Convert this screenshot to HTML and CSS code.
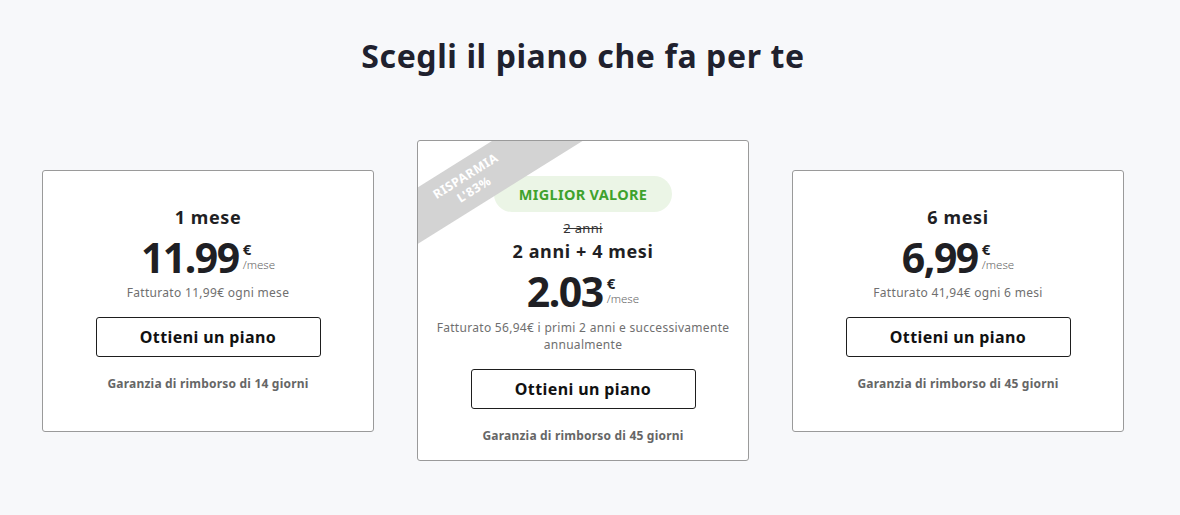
FILE: index.html
```html
<!DOCTYPE html>
<html lang="it">
<head>
<meta charset="utf-8">
<title>Scegli il piano</title>
<link rel="stylesheet" href="styles.css">
</head>
<body>
<div class="page">
  <h1 class="title">Scegli il piano che fa per te</h1>
  <div class="plans">
    <div class="card">
      <div class="plan-name">1 mese</div>
      <div class="price"><span class="amount">11.99</span><span class="unit"><span class="cur">€</span><span class="per">/mese</span></span></div>
      <div class="billed">Fatturato 11,99€ ogni mese</div>
      <button class="cta">Ottieni un piano</button>
      <div class="guarantee">Garanzia di rimborso di 14 giorni</div>
    </div>
    <div class="card card-featured">
      <div class="ribbon">RISPARMIA<br>L'83%</div>
      <div class="badge">MIGLIOR VALORE</div>
      <div class="old">2 anni</div>
      <div class="plan-name">2 anni + 4 mesi</div>
      <div class="price"><span class="amount">2.03</span><span class="unit"><span class="cur">€</span><span class="per">/mese</span></span></div>
      <div class="billed">Fatturato 56,94€ i primi 2 anni e successivamente<br>annualmente</div>
      <button class="cta">Ottieni un piano</button>
      <div class="guarantee">Garanzia di rimborso di 45 giorni</div>
    </div>
    <div class="card">
      <div class="plan-name">6 mesi</div>
      <div class="price"><span class="amount">6,99</span><span class="unit"><span class="cur">€</span><span class="per">/mese</span></span></div>
      <div class="billed">Fatturato 41,94€ ogni 6 mesi</div>
      <button class="cta">Ottieni un piano</button>
      <div class="guarantee">Garanzia di rimborso di 45 giorni</div>
    </div>
  </div>
</div>
</body>
</html>
```
FILE: styles.css
```css
* { box-sizing: border-box; }
html, body { margin: 0; padding: 0; }
body {
  background: #f7f8fa;
  font-family: "Noto Sans", "DejaVu Sans", sans-serif;
  color: #1f1f24;
}
.page {
  width: 1082px;
  margin-left: 42px;
}
.title {
  margin: 0;
  padding-top: 35px;
  height: 140px;
  text-align: center;
  font-size: 32px;
  line-height: 42px;
  font-weight: 700;
  letter-spacing: 0.6px;
  color: #20212e;
}
.plans {
  display: flex;
  align-items: center;
  gap: 43px;
}
.card {
  position: relative;
  overflow: hidden;
  width: 332px;
  height: 262px;
  background: #fff;
  border: 1px solid #9a9a9a;
  border-radius: 3px;
  display: flex;
  flex-direction: column;
  align-items: center;
  padding-top: 34px;
}
.card-featured {
  height: 321px;
  padding-top: 35px;
}
.ribbon {
  position: absolute;
  left: -68px;
  top: 18px;
  width: 240px;
  height: 48px;
  background: #d3d3d3;
  color: #fff;
  transform: rotate(-32deg);
  font-size: 12.5px;
  font-weight: 700;
  letter-spacing: 0.5px;
  line-height: 16px;
  text-align: center;
  padding-top: 8px;
}
.badge {
  width: 178px;
  height: 36px;
  border-radius: 18px;
  background: #ebf5e6;
  color: #3ea22d;
  font-size: 14.5px;
  font-weight: 700;
  letter-spacing: 0.3px;
  line-height: 36px;
  text-align: center;
}
.old {
  margin-top: 8px;
  font-size: 13px;
  line-height: 16px;
  letter-spacing: 0.3px;
  text-decoration: line-through;
  color: #333;
}
.plan-name {
  font-size: 18px;
  line-height: 24px;
  font-weight: 700;
  letter-spacing: 0.6px;
  color: #1f1f24;
}
.card-featured .plan-name { margin-top: 3px; }
.price {
  display: flex;
  align-items: flex-start;
  height: 48px;
  margin-top: 4px;
}
.amount {
  font-size: 41px;
  line-height: 48px;
  font-weight: 700;
  letter-spacing: -1.5px;
  color: #1f1f24;
}
.unit {
  display: flex;
  flex-direction: column;
  margin-left: 4px;
  padding-top: 9px;
}
.cur {
  font-size: 15px;
  line-height: 15px;
  font-weight: 700;
  color: #1f1f24;
}
.per {
  font-size: 11.5px;
  line-height: 14px;
  margin-top: 1px;
  color: #666;
  font-weight: 300;
}
.billed {
  margin-top: 3px;
  font-size: 12px;
  line-height: 17px;
  letter-spacing: 0.3px;
  color: #6f6f6f;
  text-align: center;
}
.card-featured .billed { margin-top: 4px; }
.cta {
  margin-top: 16px;
  width: 225px;
  height: 40px;
  background: #fff;
  border: 1px solid #1e1e1e;
  border-radius: 3px;
  font-family: inherit;
  font-size: 16px;
  font-weight: 700;
  letter-spacing: 0.4px;
  color: #111;
  padding: 0;
}
.guarantee {
  margin-top: 19px;
  font-size: 12px;
  line-height: 16px;
  font-weight: 700;
  letter-spacing: 0.2px;
  color: #666;
}
```
